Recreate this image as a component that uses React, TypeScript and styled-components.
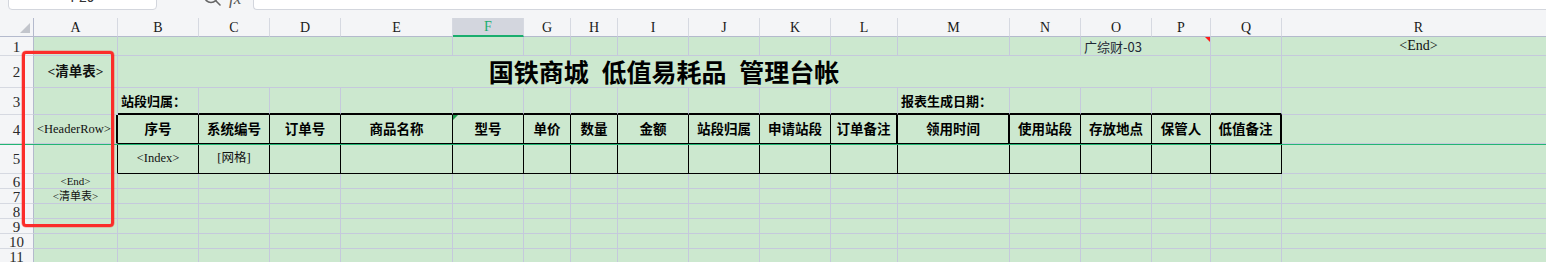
import styled, { createGlobalStyle, css } from "styled-components";

const GlobalStyle = createGlobalStyle`
  html, body {
    margin: 0;
    padding: 0;
  }
  body {
    background: #f4f5f7;
    overflow: hidden;
    font-family: "Liberation Serif", "Noto Sans CJK SC", serif;
    color: #111;
  }
`;

const LETTERS = "ABCDEFGHIJKLMNOPQR".split("");
const WIDTHS = [84, 81, 71, 71, 112, 71, 47, 47, 71, 71, 71, 67, 112, 71, 71, 59, 71, 274];
const ROW_HEIGHTS = [19, 32, 27, 29, 30, 15, 15, 15, 15, 15, 15];
const GRID = "#c5c9dc";

type Line = "grid" | "thin" | "thick" | "none";
type Kind = "plain" | "title" | "label" | "head" | "tag" | "tagBold" | "small" | "note" | "end";

const lineCss = (l: Line) =>
  l === "thick" ? "2px solid #000" : l === "thin" ? "1px solid #000" : l === "none" ? "none" : `1px solid ${GRID}`;

const kinds: Record<Kind, ReturnType<typeof css>> = {
  plain: css``,
  title: css`
    font-family: "Noto Sans CJK SC", sans-serif;
    font-size: 25px;
    font-weight: 700;
    word-spacing: 7px;
    color: #000;
  `,
  label: css`
    font-family: "Noto Sans CJK SC", sans-serif;
    font-size: 13px;
    font-weight: 700;
    color: #000;
  `,
  head: css`
    font-family: "Noto Sans CJK SC", sans-serif;
    font-size: 13.5px;
    font-weight: 700;
    color: #000;
  `,
  tag: css`
    font-size: 12.5px;
  `,
  tagBold: css`
    font-size: 13.5px;
    font-weight: 700;
  `,
  small: css`
    font-size: 11px;
  `,
  note: css`
    font-family: "Noto Sans CJK SC", sans-serif;
    font-size: 13px;
    color: #1d2736;
  `,
  end: css`
    font-size: 14px;
  `,
};

const Window = styled.div`
  display: flex;
  flex-direction: column;
  width: 1546px;
  height: 262px;
  overflow: hidden;
`;

const FormulaBar = styled.div`
  display: flex;
  align-items: flex-end;
  height: 18px;
  padding: 0 0 8px 8px;
  box-sizing: border-box;
  overflow: hidden;
  flex-shrink: 0;
`;

const NameBox = styled.div`
  width: 149px;
  height: 26px;
  box-sizing: border-box;
  background: #fff;
  border: 1px solid #d3d6dd;
  border-radius: 4px;
  display: flex;
  align-items: flex-end;
  justify-content: center;
  padding-bottom: 4px;
  font-family: "Liberation Sans", sans-serif;
  font-size: 14px;
  color: #333;
  flex-shrink: 0;
`;

const FxTools = styled.div`
  display: flex;
  align-items: flex-end;
  gap: 8px;
  margin-left: 46px;
  height: 26px;
  width: 50px;
  color: #555;
`;

const Fx = styled.span`
  font-family: "Liberation Serif", serif;
  font-style: italic;
  font-size: 17px;
  line-height: 17px;
  color: #555;
  margin-bottom: 3px;
`;

const FormulaInput = styled.div`
  flex: 1;
  height: 26px;
  box-sizing: border-box;
  background: #fff;
  border: 1px solid #d3d6dd;
  border-right: none;
  border-radius: 4px 0 0 4px;
`;

const SheetArea = styled.div`
  position: relative;
  flex: 1;
`;

const Sheet = styled.div`
  display: grid;
  grid-template-columns: 34px ${WIDTHS.map((w) => `${w}px`).join(" ")};
  grid-template-rows: 19px ${ROW_HEIGHTS.map((h) => `${h}px`).join(" ")};
  background: #cce8cf;
`;

const Corner = styled.div`
  position: relative;
  background: #f4f5f7;
  border-right: 1px solid #b4bacd;
  border-bottom: 1px solid #b4bacd;
  box-sizing: border-box;
  &::after {
    content: "";
    position: absolute;
    right: 3px;
    bottom: 3px;
    border-left: 10px solid transparent;
    border-bottom: 10px solid #c2c5cc;
  }
`;

const ColHead = styled.div<{ $active?: boolean }>`
  box-sizing: border-box;
  display: flex;
  align-items: center;
  justify-content: center;
  font-family: "Liberation Serif", serif;
  font-size: 14px;
  padding-top: 1px;
  background: ${(p) => (p.$active ? "#d3d6de" : "#f4f5f7")};
  color: ${(p) => (p.$active ? "#1aad6e" : "#1a1a1a")};
  border-right: 1px solid #d6d9e1;
  border-bottom: ${(p) => (p.$active ? "2px solid #1aad6e" : "1px solid #b4bacd")};
`;

const RowHead = styled.div`
  box-sizing: border-box;
  display: flex;
  align-items: center;
  justify-content: center;
  font-family: "Liberation Serif", serif;
  font-size: 15px;
  line-height: 1;
  padding-top: 2px;
  color: #2a2a2a;
  background: #f4f5f7;
  border-right: 1px solid #b4bacd;
  border-bottom: 1px solid #d6d9e1;
`;

const Cell = styled.div<{ $span: number; $right: Line; $bottom: Line; $left?: boolean; $kind: Kind }>`
  position: relative;
  box-sizing: border-box;
  grid-column: span ${(p) => p.$span};
  display: flex;
  align-items: center;
  justify-content: ${(p) => (p.$left ? "flex-start" : "center")};
  padding: 0 3px;
  white-space: nowrap;
  line-height: 1;
  border-right: ${(p) => lineCss(p.$right)};
  border-bottom: ${(p) => lineCss(p.$bottom)};
  ${(p) => kinds[p.$kind]}
`;

const CommentMark = styled.span`
  position: absolute;
  top: 0;
  right: 0;
  border-left: 5px solid transparent;
  border-top: 5px solid #ff1a1a;
`;

const ErrorMark = styled.span`
  position: absolute;
  top: 0;
  left: 0;
  border-right: 5px solid transparent;
  border-top: 5px solid #1d9a4c;
`;

const FreezeLine = styled.div`
  position: absolute;
  left: 0;
  right: 0;
  top: 126px;
  height: 1px;
  background: #22b574;
`;

const Highlight = styled.div`
  position: absolute;
  left: 22px;
  top: 33px;
  width: 92px;
  height: 176px;
  box-sizing: border-box;
  border: 3px solid #fb2d2a;
  border-radius: 4px;
  box-shadow: 0 0 0 0.6px rgba(251, 45, 42, 0.45);
`;

type CellDef = {
  text?: string;
  span?: number;
  kind?: Kind;
  left?: boolean;
  comment?: boolean;
  error?: boolean;
};

const HEADERS = [
  "序号", "系统编号", "订单号", "商品名称", "型号", "单价", "数量", "金额",
  "站段归属", "申请站段", "订单备注", "领用时间", "使用站段", "存放地点", "保管人", "低值备注",
];

// sparse content per sheet row, keyed by column index (A = 0)
const ROWS: Record<number, CellDef>[] = [
  {
    1: { span: 4 },
    14: { text: "广综财-03", kind: "note", left: true, span: 2, comment: true },
    17: { text: "<End>", kind: "end" },
  },
  {
    0: { text: "<清单表>", kind: "tagBold" },
    1: { text: "国铁商城 低值易耗品 管理台帐", kind: "title", span: 15 },
  },
  {
    1: { text: "站段归属：", kind: "label", left: true },
    12: { text: "报表生成日期：", kind: "label", left: true },
  },
  {
    0: { text: "<HeaderRow>", kind: "tag", left: true },
    ...Object.fromEntries(
      HEADERS.map((h, i) => [i + 1, { text: h, kind: "head" as Kind, error: i === 4 }])
    ),
  },
  {
    1: { text: "<Index>", kind: "tag" },
    2: { text: "[网格]", kind: "tag" },
  },
  { 0: { text: "<End>", kind: "small" } },
  { 0: { text: "<清单表>", kind: "small" } },
  {},
  {},
  {},
  {},
];

const inTable = (col: number) => col >= 1 && col <= 16;

function borders(row: number, col: number, span: number): { right: Line; bottom: Line } {
  const last = col + span - 1;
  let right: Line = "grid";
  let bottom: Line = "grid";
  if (row === 2 && inTable(col)) bottom = "thick";
  if (row === 3 || row === 4) {
    if (col === 0) right = row === 3 ? "thick" : "thin";
    if (inTable(col)) {
      bottom = "thin";
      right = row === 3 && (last === 11 || last === 12 || last === 16) ? "thick" : "thin";
    }
  }
  return { right, bottom };
}

function SheetRow({ index }: { index: number }) {
  const defs = ROWS[index];
  const cells = [];
  let col = 0;
  while (col < LETTERS.length) {
    const def = defs[col] ?? {};
    const span = def.span ?? 1;
    const { right, bottom } = borders(index, col, span);
    cells.push(
      <Cell
        key={col}
        $span={span}
        $right={right}
        $bottom={bottom}
        $left={def.left}
        $kind={def.kind ?? "plain"}
      >
        {def.error && <ErrorMark />}
        {def.text}
        {def.comment && <CommentMark />}
      </Cell>
    );
    col += span;
  }
  return (
    <>
      <RowHead>{index + 1}</RowHead>
      {cells}
    </>
  );
}

function SearchIcon() {
  return (
    <svg width="18" height="26" viewBox="0 0 18 26" fill="none" stroke="#666" strokeWidth="1.6">
      <circle cx="8" cy="12" r="6.5" />
      <path d="M12.8 16.8 L17 21" strokeLinecap="round" />
    </svg>
  );
}

export default function App() {
  return (
    <>
      <GlobalStyle />
      <Window>
        <FormulaBar>
          <NameBox>F29</NameBox>
          <FxTools>
            <SearchIcon />
            <Fx>fx</Fx>
          </FxTools>
          <FormulaInput />
        </FormulaBar>
        <SheetArea>
          <Sheet>
            <Corner />
            {LETTERS.map((l) => (
              <ColHead key={l} $active={l === "F"}>
                {l}
              </ColHead>
            ))}
            {ROWS.map((_, i) => (
              <SheetRow key={i} index={i} />
            ))}
          </Sheet>
          <FreezeLine />
          <Highlight />
        </SheetArea>
      </Window>
    </>
  );
}
